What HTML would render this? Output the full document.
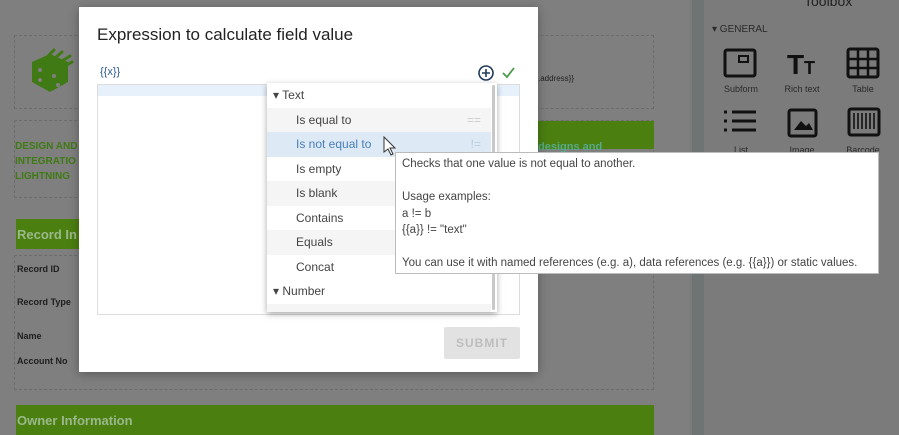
<!DOCTYPE html>
<html><head><meta charset="utf-8">
<style>
*{margin:0;padding:0;box-sizing:border-box}
body{width:899px;height:435px;overflow:hidden;background:#7b7b7b;font-family:"Liberation Sans",sans-serif;position:relative}
.abs{position:absolute}
.page{left:0;top:0;width:690px;height:435px;background:#7f7f7f}
.dot{position:absolute;border:1px dashed #6c6c6c}
.green{position:absolute;background:#4b7f10}
.lbl{position:absolute;font-size:9px;font-weight:bold;color:#1e1e1e}
.sep{left:692px;top:0;width:12px;height:435px;background:#6e7474}
.tb{left:704px;top:0;width:195px;height:435px;background:#7b7b7b}
.tl{position:absolute;font-size:9px;color:#2a2a2a;width:60px;text-align:center}
.modal{left:79px;top:7px;width:459px;height:365px;background:#fff;box-shadow:0 2px 10px rgba(0,0,0,.3)}
.dd{left:267px;top:83px;width:230px;height:229px;background:#fff;box-shadow:0 2px 6px rgba(0,0,0,.35);overflow:hidden;font-size:12px;color:#444}
.row{position:absolute;left:0;width:224px;height:24.5px;line-height:24.5px;padding-left:29px}
.hd{padding-left:6px}
.tip{left:395px;top:152px;width:484px;height:122px;background:#fff;border:1px solid #bbb;font-size:11.5px;color:#444;padding:3px 0 0 6px;line-height:16.5px}
</style></head><body>
<div class="abs page"></div>
<div class="dot" style="left:14px;top:35px;width:640px;height:74px"></div>
<div class="dot" style="left:14px;top:120px;width:640px;height:78px"></div>
<svg class="abs" style="left:28px;top:48px" width="48" height="50" viewBox="0 0 48 50">
<polygon points="4,14 22,6 40,14 40,34 22,44 4,34" fill="#3f7a14"/>
<g stroke="#3f7a14" stroke-width="3" stroke-linecap="round"><line x1="14" y1="14" x2="26" y2="2"/><line x1="20" y1="16" x2="34" y2="4"/><line x1="26" y1="18" x2="42" y2="8"/><line x1="30" y1="22" x2="44" y2="14"/></g>
<g fill="#7f7f7f"><circle cx="12" cy="22" r="2"/><circle cx="12" cy="32" r="2"/><circle cx="26" cy="28" r="2"/><circle cx="30" cy="37" r="2"/></g>
</svg>
<div class="abs" style="left:15px;top:139px;font-size:10px;font-weight:bold;color:#3f7a14;line-height:15px">DESIGN AND<br>INTEGRATIO<br>LIGHTNING</div>
<div class="abs" style="left:538px;top:74px;font-size:8px;color:#222">.address}}</div>
<div class="green" style="left:538px;top:121px;width:116px;height:28px"></div>
<div class="abs" style="left:538px;top:141px;font-size:11px;color:#5a8;font-weight:bold">designs and</div>
<div class="green" style="left:16px;top:219px;width:70px;height:30px"></div>
<div class="abs" style="left:17px;top:227px;font-size:13px;font-weight:bold;color:#9ab88a">Record In</div>
<div class="dot" style="left:14px;top:255px;width:640px;height:135px"></div>
<div class="lbl" style="left:17px;top:264px">Record ID</div>
<div class="lbl" style="left:17px;top:297px">Record Type</div>
<div class="lbl" style="left:17px;top:331px">Name</div>
<div class="lbl" style="left:17px;top:356px">Account No</div>
<div class="green" style="left:16px;top:405px;width:638px;height:30px"></div>
<div class="abs" style="left:17px;top:413px;font-size:13px;font-weight:bold;color:#9ab88a">Owner Information</div>

<div class="abs sep"></div>
<div class="abs tb"></div>
<div class="abs" style="left:804px;top:-7px;font-size:14px;color:#222">Toolbox</div>
<div class="abs" style="left:712px;top:24px;font-size:10px;color:#2a2a2a">▾ GENERAL</div>
<svg class="abs" style="left:722px;top:47px" width="160" height="95" viewBox="0 0 160 95" fill="none" stroke="#111" stroke-width="3">
<rect x="3" y="3" width="30" height="26" rx="2"/><rect x="17" y="9" width="9" height="6" stroke-width="2"/>
<text x="65" y="27" font-family="Liberation Sans" font-weight="bold" font-size="28" fill="#111" stroke="none">T</text><text x="82" y="27" font-family="Liberation Sans" font-weight="bold" font-size="18" fill="#111" stroke="none">T</text>
<rect x="126" y="2" width="30" height="28" rx="2"/><path d="M136 2v28M146 2v28M126 12h30M126 21h30" stroke-width="2.5"/>
<path d="M10 65h24M10 74h24M10 83h24"/><path d="M2 65h3M2 74h3M2 83h3"/>
<rect x="67" y="63" width="27" height="26" rx="2"/><path d="M72 83l7-9 5 5 3-3 4 7z" fill="#111" stroke="none"/>
<rect x="127" y="62" width="30" height="26" rx="2"/><path d="M132 66v16M136 66v16M140 66v16M144 66v16M148 66v16M152 66v16" stroke-width="1.6"/>
</svg>
<div class="tl" style="left:711px;top:84px">Subform</div>
<div class="tl" style="left:772px;top:84px">Rich text</div>
<div class="tl" style="left:833px;top:84px">Table</div>
<div class="tl" style="left:711px;top:145px">List</div>
<div class="tl" style="left:772px;top:145px">Image</div>
<div class="tl" style="left:833px;top:145px">Barcode</div>

<div class="abs modal"></div>
<div class="abs" style="left:97px;top:25px;font-size:17px;color:#222">Expression to calculate field value</div>
<div class="abs" style="left:100px;top:66px;font-size:11px;color:#2a5a90">{{x}}</div>
<svg class="abs" style="left:478px;top:64px" width="40" height="18" viewBox="0 0 40 18">
<circle cx="8" cy="9" r="7" fill="none" stroke="#1e3c5a" stroke-width="1.6"/><path d="M8 5v8M4 9h8" stroke="#1e3c5a" stroke-width="1.6"/>
<path d="M25 9l4 4 7-9" fill="none" stroke="#4a9a4a" stroke-width="1.8"/>
</svg>
<div class="abs" style="left:97px;top:84px;width:423px;height:231px;border:1px solid #ddd"></div>
<div class="abs" style="left:98px;top:85px;width:421px;height:11px;background:#e6f1fb"></div>
<div class="abs" style="left:444px;top:327px;width:76px;height:32px;background:#e2e2e2;border-radius:2px;color:#bdbdbd;font-size:12px;font-weight:bold;letter-spacing:1px;text-align:center;line-height:32px">SUBMIT</div>

<div class="abs dd">
<div class="row hd" style="top:0">▾ Text</div>
<div class="row" style="top:24.5px;background:#f5f5f5">Is equal to<span style="position:absolute;right:10px;color:#ccc">==</span></div>
<div class="row" style="top:49px;background:#dde9f5;color:#4a7fb8">Is not equal to<span style="position:absolute;right:10px;color:#b8cde0">!=</span></div>
<div class="row" style="top:73.5px">Is empty</div>
<div class="row" style="top:98px;background:#f5f5f5">Is blank</div>
<div class="row" style="top:122.5px">Contains</div>
<div class="row" style="top:147px;background:#f5f5f5">Equals</div>
<div class="row" style="top:171.5px">Concat</div>
<div class="row hd" style="top:196px">▾ Number</div>
<div class="row" style="top:220.5px;background:#f5f5f5"></div>
<div style="position:absolute;left:225px;top:2px;width:3px;height:225px;background:#c8c8c8;border-radius:2px"></div>
</div>
<svg class="abs" style="left:383px;top:136px" width="14" height="20" viewBox="0 0 14 20"><path d="M1 1v15l4-3 3 6 2-1-3-6h5z" fill="#fff" stroke="#333" stroke-width="1"/></svg>

<div class="abs tip" style="white-space:nowrap">Checks that one value is not equal to another.<br><br>Usage examples:<br>a != b<br>{{a}} != "text"<br><br>You can use it with named references (e.g. a), data references (e.g. {{a}}) or static values.</div>
</body></html>
